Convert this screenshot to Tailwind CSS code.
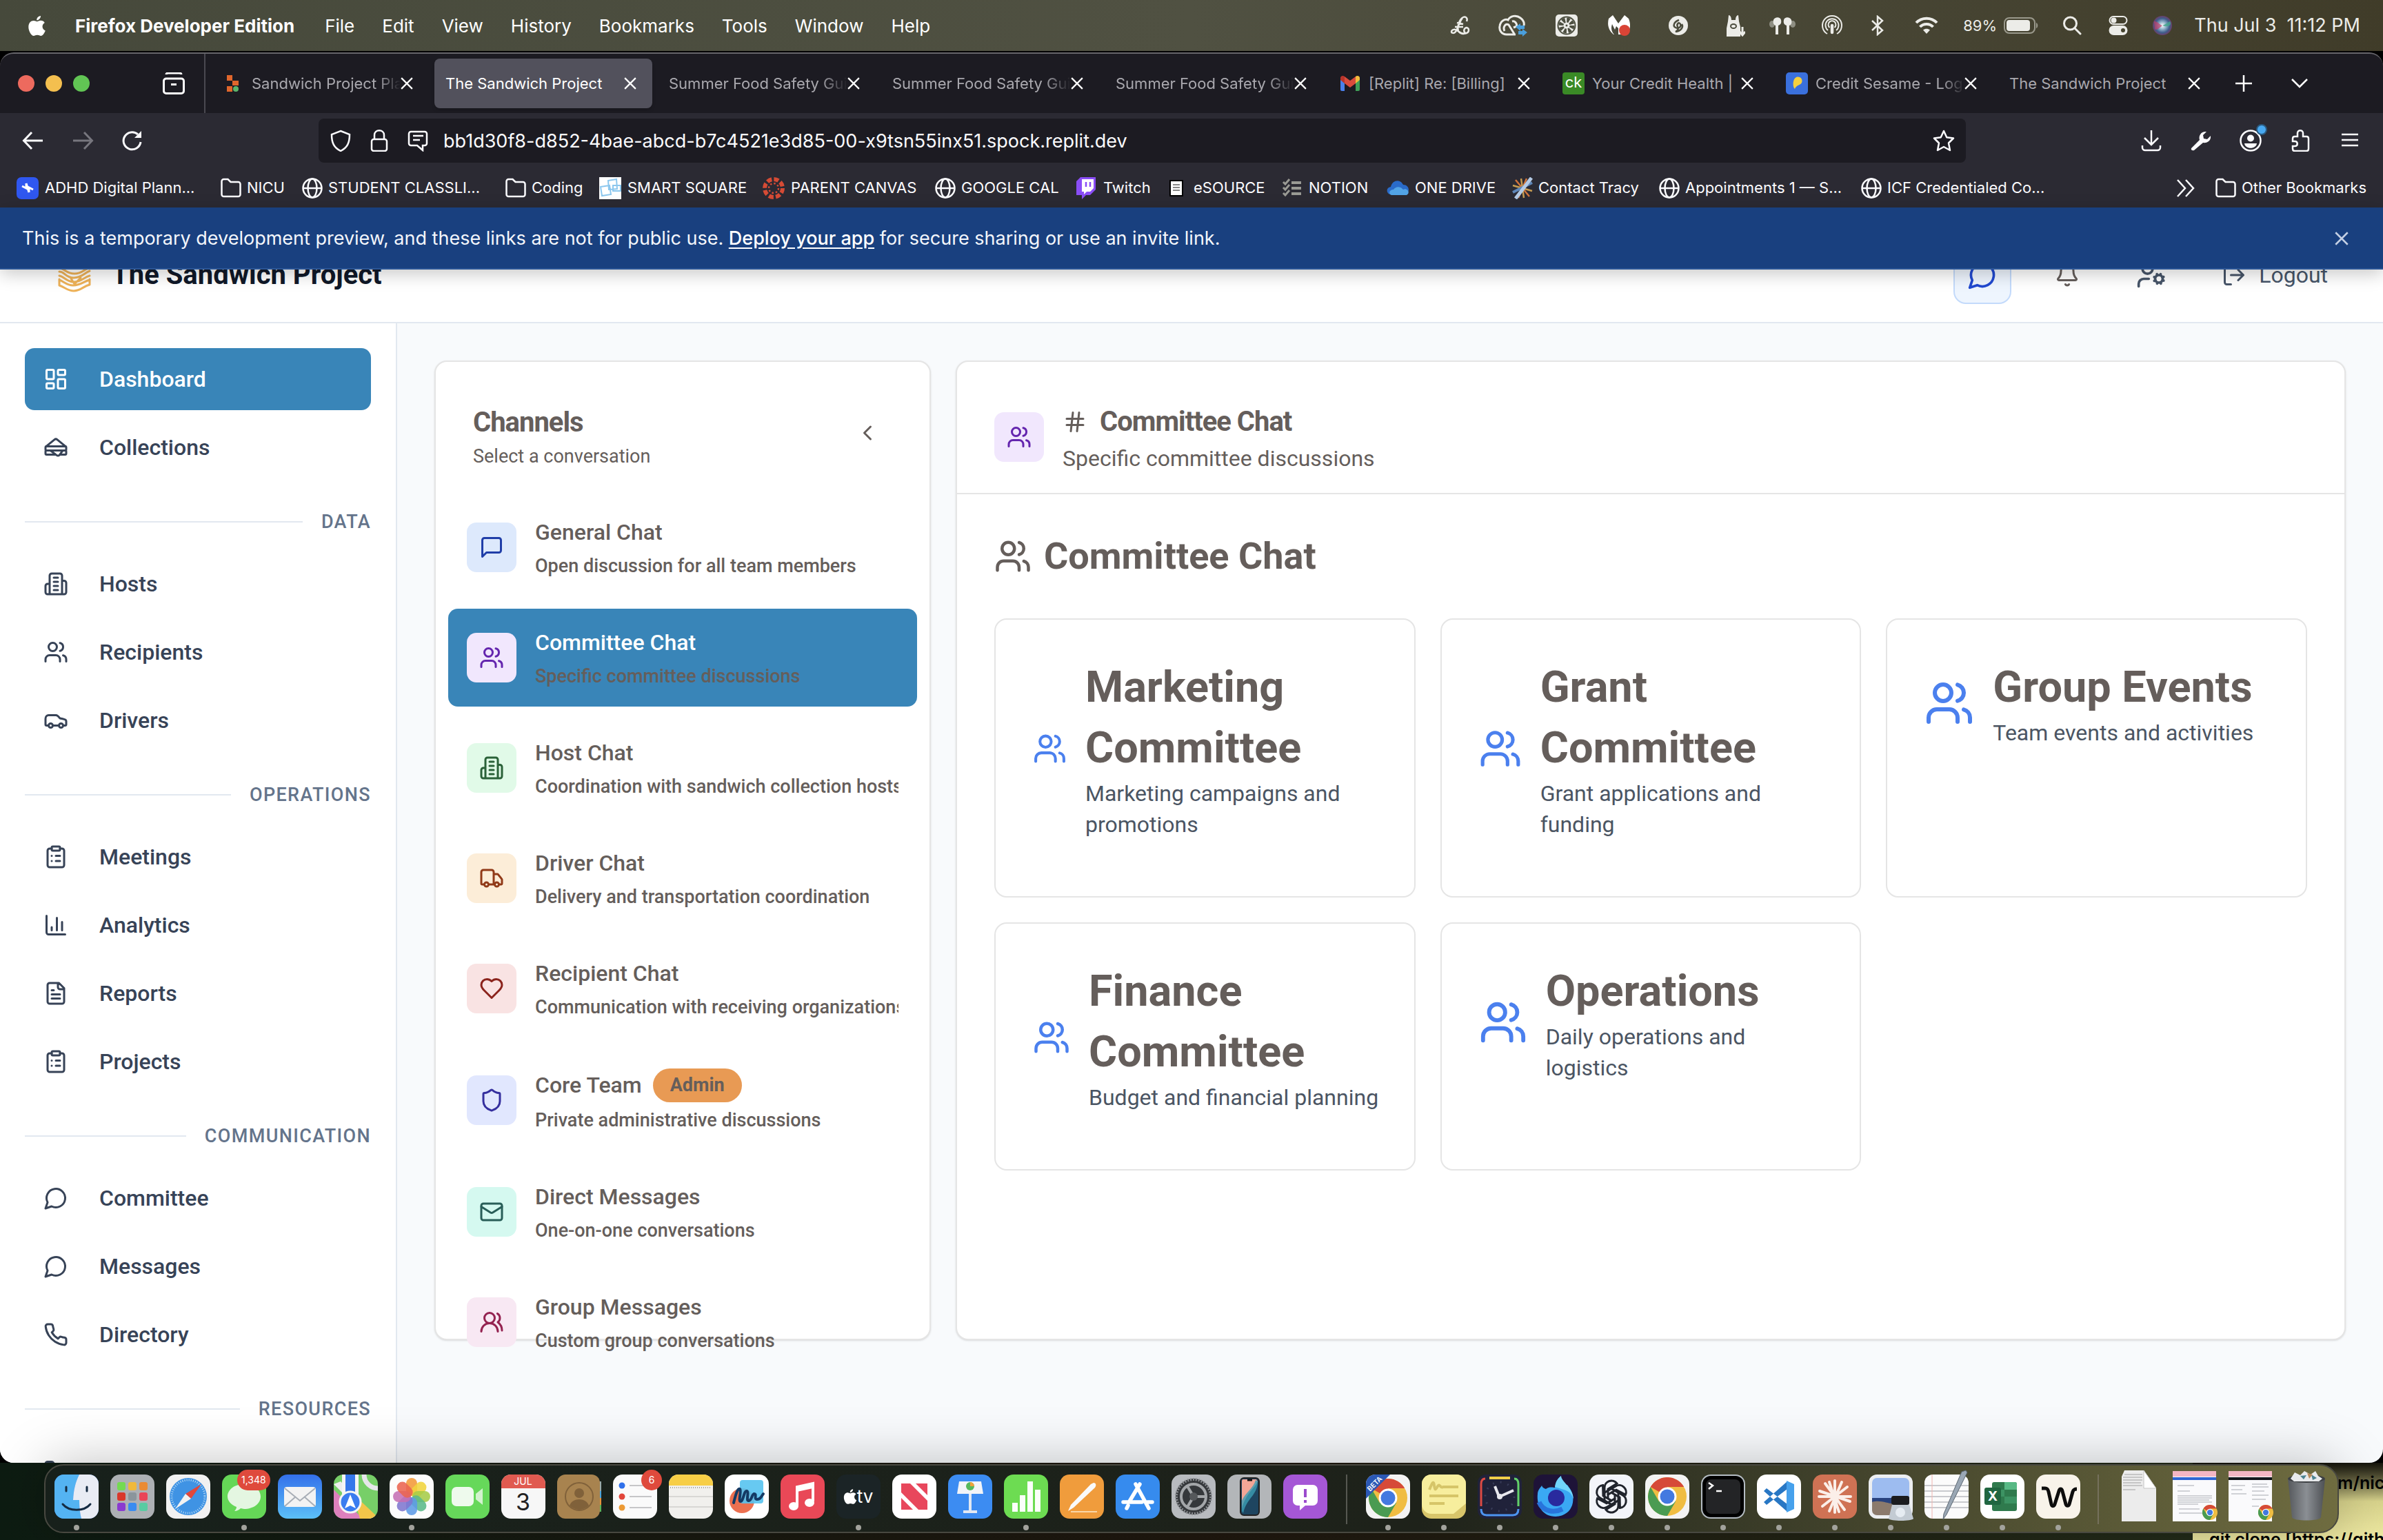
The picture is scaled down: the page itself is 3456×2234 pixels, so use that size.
<!DOCTYPE html>
<html lang="en">
<head>
<meta charset="utf-8">
<title>The Sandwich Project</title>
<script src="https://cdn.jsdelivr.net/npm/@tailwindcss/browser@4"></script>
</head>
<body class="bg-black">
<svg class="hidden" aria-hidden="true">
  <defs>
    <symbol id="dash" viewBox="0 0 24 24"><rect x="3" y="3" width="7" height="9" rx="1"/><rect x="14" y="3" width="7" height="5" rx="1"/><rect x="14" y="12" width="7" height="9" rx="1"/><rect x="3" y="16" width="7" height="5" rx="1"/></symbol>
    <symbol id="sandwich" viewBox="0 0 24 24"><path d="m2.37 11.223 8.372-6.777a2 2 0 0 1 2.516 0l8.371 6.777M21 15a1 1 0 0 1 1 1v2a1 1 0 0 1-1 1h-5.25M3 15a1 1 0 0 0-1 1v2a1 1 0 0 0 1 1h9m-5.33-4 6.13 4.6a2 2 0 0 0 2.8-.4l3.15-4.2"/><rect x="2" y="11" width="20" height="4" rx="1"/></symbol>
    <symbol id="building" viewBox="0 0 24 24"><path d="M6 22V4a2 2 0 0 1 2-2h8a2 2 0 0 1 2 2v18ZM6 12H4a2 2 0 0 0-2 2v6a2 2 0 0 0 2 2h2M18 9h2a2 2 0 0 1 2 2v9a2 2 0 0 1-2 2h-2M10 6h4M10 10h4M10 14h4M10 18h4"/></symbol>
    <symbol id="users" viewBox="0 0 24 24"><path d="M16 21v-2a4 4 0 0 0-4-4H6a4 4 0 0 0-4 4v2M22 21v-2a4 4 0 0 0-3-3.87M16 3.13a4 4 0 0 1 0 7.75"/><circle cx="9" cy="7" r="4"/></symbol>
    <symbol id="car" viewBox="0 0 24 24"><path d="M19 17h2c.6 0 1-.4 1-1v-3c0-.9-.7-1.7-1.5-1.9C18.700 10.600 16 10 16 10s-1.300-1.400-2.200-2.300c-.5-.4-1.100-.7-1.800-.7H5c-1.700 0-3 1.600-3 3.500V16c0 .6.4 1 1 1h2M9 17h6"/><circle cx="7" cy="17" r="2"/><circle cx="17" cy="17" r="2"/></symbol>
    <symbol id="clipboard" viewBox="0 0 24 24"><rect x="8" y="2" width="8" height="4" rx="1"/><path d="M16 4h2a2 2 0 0 1 2 2v14a2 2 0 0 1-2 2H6a2 2 0 0 1-2-2V6a2 2 0 0 1 2-2h2M12 11h4M12 16h4M8 11h.01M8 16h.01"/></symbol>
    <symbol id="chart" viewBox="0 0 24 24"><path d="M3 3v16a2 2 0 0 0 2 2h16M18 17V9M13 17V5M8 17v-3"/></symbol>
    <symbol id="file" viewBox="0 0 24 24"><path d="M15 2H6a2 2 0 0 0-2 2v16a2 2 0 0 0 2 2h12a2 2 0 0 0 2-2V7ZM14 2v4a2 2 0 0 0 2 2h4M10 9H8M16 13H8M16 17H8"/></symbol>
    <symbol id="bubble" viewBox="0 0 24 24"><path d="M7.900 20A9 9 0 1 0 4 16.100L2 22Z"/></symbol>
    <symbol id="phone" viewBox="0 0 24 24"><path d="M22 16.920v3a2 2 0 0 1-2.180 2 19.790 19.790 0 0 1-8.630-3.070 19.500 19.500 0 0 1-6-6 19.790 19.790 0 0 1-3.070-8.670A2 2 0 0 1 4.110 2h3a2 2 0 0 1 2 1.720 12.840 12.840 0 0 0 .7 2.810 2 2 0 0 1-.45 2.110L8.090 9.910a16 16 0 0 0 6 6l1.270-1.270a2 2 0 0 1 2.110-.45 12.840 12.840 0 0 0 2.810.7A2 2 0 0 1 22 16.920z"/></symbol>
    <symbol id="folderl" viewBox="0 0 24 24"><path d="M20 20a2 2 0 0 0 2-2V8a2 2 0 0 0-2-2h-7.900a2 2 0 0 1-1.690-.9L9.600 3.900A2 2 0 0 0 7.930 3H4a2 2 0 0 0-2 2v13a2 2 0 0 0 2 2Z"/></symbol>
    <symbol id="square" viewBox="0 0 24 24"><path d="M21 15a2 2 0 0 1-2 2H7l-4 4V5a2 2 0 0 1 2-2h14a2 2 0 0 1 2 2z"/></symbol>
    <symbol id="truck" viewBox="0 0 24 24"><path d="M14 18V6a2 2 0 0 0-2-2H4a2 2 0 0 0-2 2v11a1 1 0 0 0 1 1h2M15 18H9M19 18h2a1 1 0 0 0 1-1v-3.650a1 1 0 0 0-.22-.624l-3.480-4.350A1 1 0 0 0 17.520 8H14"/><circle cx="17" cy="18" r="2"/><circle cx="7" cy="18" r="2"/></symbol>
    <symbol id="heart" viewBox="0 0 24 24"><path d="M19 14c1.490-1.460 3-3.210 3-5.500A5.500 5.500 0 0 0 16.500 3c-1.760 0-3 .5-4.500 2-1.500-1.500-2.740-2-4.500-2A5.500 5.500 0 0 0 2 8.500c0 2.300 1.500 4.050 3 5.500l7 7Z"/></symbol>
    <symbol id="shield" viewBox="0 0 24 24"><path d="M20 13c0 5-3.500 7.500-7.660 8.950a1 1 0 0 1-.67-.01C7.500 20.500 4 18 4 13V6a1 1 0 0 1 1-1c2 0 4.500-1.200 6.240-2.720a1.170 1.170 0 0 1 1.520 0C14.510 3.810 17 5 19 5a1 1 0 0 1 1 1z"/></symbol>
    <symbol id="mail" viewBox="0 0 24 24"><rect x="2" y="4" width="20" height="16" rx="2"/><path d="m22 7-8.970 5.700a1.940 1.940 0 0 1-2.060 0L2 7"/></symbol>
    <symbol id="round" viewBox="0 0 24 24"><path d="M18 21a8 8 0 0 0-16 0M22 20c0-3.370-2-6.500-4-8a5 5 0 0 0-.45-8.300"/><circle cx="10" cy="8" r="5"/></symbol>
    <symbol id="hash" viewBox="0 0 24 24"><path d="M4 9h16M4 15h16M10 3 8 21M16 3l-2 18"/></symbol>
    <symbol id="left" viewBox="0 0 24 24"><path d="m15 18-6-6 6-6"/></symbol>
    <symbol id="bell" viewBox="0 0 24 24"><path d="M10.268 21a2 2 0 0 0 3.464 0M3.262 15.326A1 1 0 0 0 4 17h16a1 1 0 0 0 .74-1.673C19.410 13.956 18 12.499 18 8A6 6 0 0 0 6 8c0 4.499-1.411 5.956-2.738 7.326"/></symbol>
    <symbol id="cog" viewBox="0 0 24 24"><circle cx="18" cy="15" r="3"/><circle cx="9" cy="7" r="4"/><path d="M10 15H6a4 4 0 0 0-4 4v2m19.700-4.600-.9-.3m-5.600-2.200-.9-.3m2.300 5.100.3-.9m2.200-5.600.3-.9m.2 7.400-.4-1m-2.400-5.400-.4-1m-2.100 5.300 1-.4m5.400-2.400 1-.4"/></symbol>
    <symbol id="logout" viewBox="0 0 24 24"><path d="M9 21H5a2 2 0 0 1-2-2V5a2 2 0 0 1 2-2h4M16 17l5-5-5-5M21 12H9"/></symbol>
    <symbol id="x" viewBox="0 0 16 16"><path d="m1 1 14 14M15 1 1 15"/></symbol>
    <symbol id="folder" viewBox="0 0 32 32"><path d="M2.500 6a3 3 0 0 1 3-3h6l4 4h11a3 3 0 0 1 3 3v15a3 3 0 0 1-3 3h-21a3 3 0 0 1-3-3z"/></symbol>
    <symbol id="globe" viewBox="0 0 32 32"><circle cx="16" cy="16" r="13.500"/><ellipse cx="16" cy="16" rx="6.500" ry="13.500"/><path d="M2.500 16h27"/></symbol>
    <symbol id="chrome" viewBox="0 0 48 48"><circle cx="24" cy="24" r="24" fill="#f0bd42"/><path d="M24 24 3.200 12A24 24 0 0 1 44.800 12H24z" fill="#d64a38"/><path d="M3.200 12A24 24 0 0 0 24 48L34.400 30 24 24 13.600 30z" fill="#4a9b52"/><circle cx="24" cy="24" r="11.500" fill="#fff"/><circle cx="24" cy="24" r="9" fill="#4379e0"/></symbol>
    <symbol id="apple" viewBox="0 0 24 28"><path d="M17 1c.2 2.700-2.300 5.800-5.200 5.700C11.500 4 14 1.200 17 1zM12.200 8.300c1 0 2.500-1.300 4.900-1.300 2 0 4 1 5.100 2.900-4.400 2.500-3.600 8.600.9 10.400-1.200 3-3.300 6.700-5.800 6.700-1.700 0-2.500-1.100-4.700-1.100S9.400 27 7.700 27C4.700 27 1 20.600 1 15.500 1 10 4.300 7.200 7.700 7.200c2 0 3.400 1.100 4.500 1.100z" fill="currentColor" stroke="none"/></symbol>
  </defs>
</svg>

<div class="flex h-screen flex-col overflow-hidden bg-black">

  <!-- System menu bar -->
  <header class="flex h-[74px] shrink-0 items-center justify-between bg-linear-to-r from-[#46493b] via-[#505142] to-[#403c29] pl-10 pr-[33px] font-[Inter,sans-serif] text-[26px] text-white">
    <nav class="flex items-center gap-10" aria-label="Menu bar">
      <svg class="mr-0.5 h-[31px] w-[27px]" viewBox="0 0 24 28"><use href="#apple"/></svg>
      <button class="mr-1 font-bold">Firefox Developer Edition</button>
      <button>File</button><button>Edit</button><button>View</button><button>History</button><button>Bookmarks</button><button>Tools</button><button>Window</button><button>Help</button>
    </nav>
    <div class="flex items-center text-[#ecece8]">
      <span class="flex w-[76px] justify-center"><svg class="size-8" viewBox="0 0 32 32" fill="none" stroke="currentColor" stroke-width="2.500"><path d="M26 10c2-4-1-8-5-6-6 3-9 15-7 20 2 4 8 5 12 3M20 5c-4 4-6 14-10 20-2 3-6 2-6 0s4-5 8-2 8 6 14 4c4-2 4-7 0-8-4 1-5 5-2 8M9 18h12M12 12l9 2"/></svg></span>
      <span class="flex w-[78px] justify-center"><svg class="h-8 w-11" viewBox="0 0 44 32" fill="none" stroke="currentColor" stroke-width="3"><path d="M26 29H13C5 29 2 22 3 17 4 9 11 6 15 8c3-6 12-8 18-3 4 3 6 7 5 11M10 24c-3-6 2-12 6-9l8 13M21 10c4-1 7 3 7 7l-5 2"/><path d="M26 18l7-5v3h6v5h-6v3zM43 26l-7 6v-3h-6v-5h6v-3z" fill="#4a9fdc" stroke="none"/></svg></span>
      <span class="flex w-[78px] justify-center"><svg class="size-8" viewBox="0 0 32 32"><rect width="32" height="32" rx="5" fill="currentColor"/><circle cx="16" cy="16" r="12.500" fill="none" stroke="#4d4f40" stroke-width="2"/><circle cx="16" cy="16" r="8" fill="none" stroke="#4d4f40" stroke-width="7" stroke-dasharray="4 2.280"/><circle cx="16" cy="16" r="3.500" fill="currentColor"/><circle cx="16" cy="16" r="1.500" fill="#4d4f40"/></svg></span>
      <span class="flex w-[74px] justify-center"><svg class="size-8" viewBox="0 0 32 32"><path d="M1 6 7 1l8 12L24 1l6 5c4 10 2 18-4 23H8C0 22-1 14 1 6z" fill="#fff"/><path d="m6 14 4 8 2-5 3 3v9H9c-4-4-5-9-3-15z" fill="#4a4a3c"/><circle cx="24" cy="23" r="8" fill="#d94436"/></svg></span>
      <span class="flex w-[98px] justify-center"><svg class="size-7" viewBox="0 0 28 28"><circle cx="14" cy="14" r="14" fill="currentColor"/><path d="M15 6c-8 3-9 9-5 11s9-1 7-5-6 0-4 4c2 4-1 6-3 7 8-1 12-7 9-11" fill="none" stroke="#4b4c3d" stroke-width="2.500"/></svg></span>
      <span class="flex w-[66px] justify-center"><svg class="h-8 w-[30px]" viewBox="0 0 30 32"><path d="M3 32V20L5 10l1-9c3 0 4 4 4 7h6c0-3 1-7 4-7l1 9 2 8v14z" fill="currentColor"/><path d="M26 18v10m-4-3 4 5 4-5" stroke="#ecece8" stroke-width="3" fill="none"/><ellipse cx="13" cy="17" rx="5" ry="4" fill="#4b4c3d"/><ellipse cx="13" cy="17" rx="3" ry="2" fill="#ecece8"/></svg></span>
      <span class="flex w-[72px] justify-center"><svg class="h-7 w-[38px]" viewBox="0 0 38 28"><ellipse cx="4" cy="12" rx="4" ry="5" fill="#8e8e82"/><ellipse cx="34" cy="12" rx="4" ry="5" fill="#8e8e82"/><path d="M6 6c2-5 10-5 11 0s-1 7-4 8v13H9V14C6 13 5 10 6 6zM32 6c-2-5-10-5-11 0s1 7 4 8v13h4V14c3-1 4-4 3-8z" fill="currentColor"/></svg></span>
      <span class="flex w-[72px] justify-center"><svg class="size-8" viewBox="0 0 32 32" fill="none" stroke="currentColor" stroke-width="2"><path d="M9 28a14 14 0 1 1 14 0M10 23a9.500 9.500 0 1 1 12 0M12.500 19a5.500 5.500 0 1 1 7 0"/><path d="M16 16v10" stroke-width="4.500" stroke-linecap="round"/></svg></span>
      <span class="flex w-[60px] justify-center"><svg class="h-[30px] w-5" viewBox="0 0 20 30" fill="none" stroke="currentColor" stroke-width="2.500"><path d="m2 8 15 14-7 6V2l7 6L2 22"/></svg></span>
      <span class="flex w-[82px] justify-center"><svg class="h-[26px] w-[34px]" viewBox="0 0 34 26" fill="none" stroke="currentColor" stroke-width="4"><path d="M2 9c8-8.500 22-8.500 30 0M7.500 15c5-5.500 14-5.500 19 0"/><path d="M17 25l-5-5.500c3-2.500 7-2.500 10 0z" fill="currentColor" stroke="none"/></svg></span>
      <span class="w-[71px] pl-3 text-[22px]">89%</span>
      <svg class="h-6 w-[50px]" viewBox="0 0 50 24"><rect x="1" y="1" width="44" height="22" rx="7" fill="none" stroke="#9a998c" stroke-width="2"/><rect x="4" y="4" width="34" height="16" rx="4" fill="#ecece8"/><path d="M47 8c3 1 3 7 0 8z" fill="#9a998c"/></svg>
      <span class="flex w-[98px] justify-center"><svg class="size-7" viewBox="0 0 28 28" fill="none" stroke="currentColor" stroke-width="3"><circle cx="11.500" cy="11" r="9"/><path d="m18 18 8 8" stroke-linecap="round"/></svg></span>
      <span class="flex w-9 justify-center"><svg class="size-7" viewBox="0 0 28 28" fill="none" stroke="currentColor" stroke-width="2"><rect x="1.500" y="1" width="25" height="11" rx="5.500"/><circle cx="7.500" cy="6.500" r="3" fill="currentColor"/><rect x="1.500" y="15" width="25" height="12" rx="6" fill="currentColor"/><circle cx="21" cy="21" r="3" fill="#46442f" stroke="none"/></svg></span>
      <span class="flex w-[92px] justify-center"><svg class="size-7" viewBox="0 0 28 28"><defs><radialGradient id="siri"><stop offset="0" stop-color="#fff"/><stop offset=".4" stop-color="#8fb0c8"/><stop offset=".75" stop-color="#3f5d8c"/><stop offset="1" stop-color="#6b3f6a"/></radialGradient></defs><circle cx="14" cy="14" r="14" fill="url(#siri)"/><path d="M2 8c6 0 8 5 12 6-4 3-8 8-11 5" fill="#c23d6a" opacity=".7"/><path d="M14 14c4-1 8-5 11-6 4 6-4 9-11 6z" fill="#42a58c" opacity=".8"/></svg></span>
      <time class="whitespace-pre text-[27px]">Thu Jul 3  11:12 PM</time>
    </div>
  </header>

  <!-- Browser window -->
  <div class="mt-0.5 flex min-h-0 flex-1 flex-col overflow-hidden rounded-[20px] border-t-2 border-[#67666c] bg-[#1c1b22]">

    <!-- Tab strip -->
    <div class="flex h-[86px] shrink-0 items-center font-[Inter,sans-serif] text-[22px] text-[#a9a8ae]">
      <div class="flex h-full w-[298px] shrink-0 items-center border-r-2 border-[#4a4951] pl-[26px]">
        <div class="flex gap-4"><span class="size-6 rounded-full bg-[#ed6a5e]"></span><span class="size-6 rounded-full bg-[#f4bf4f]"></span><span class="size-6 rounded-full bg-[#61c554]"></span></div>
        <button class="ml-[106px]" aria-label="Recent tabs"><svg class="size-8" viewBox="0 0 32 32" fill="none" stroke="#fff" stroke-width="3"><path d="M5 3c0-2 2-2 3-2h16c1 0 3 0 3 2"/><rect x="1.500" y="9" width="29" height="21.500" rx="3.500"/><path d="M12 17.500h8"/></svg></button>
      </div>
      <div class="flex gap-2 pl-2">
        <div class="flex h-[72px] w-[316px] items-center pl-4 pr-[23px]"><svg class="mr-[11px] size-8 shrink-0" viewBox="0 0 32 32"><path d="M7 4h8v8H7zM15 12h9v7h-9zM7 20h8v8H7z" fill="#e0662c"/><circle cx="20" cy="24" r="4" fill="#5bb56b"/></svg><button class="flex-1 overflow-hidden whitespace-nowrap text-left [mask-image:linear-gradient(to_right,black_85%,transparent)]">Sandwich Project Pla</button><button aria-label="Close tab"><svg class="size-[18px]" fill="none" stroke="#fff" stroke-width="2"><use href="#x"/></svg></button></div>
        <div class="flex h-[72px] w-[316px] items-center rounded-lg bg-[#52515c] pl-4 pr-[23px] text-white shadow-md"><button class="flex-1 overflow-hidden whitespace-nowrap text-left">The Sandwich Project</button><button aria-label="Close tab"><svg class="size-[18px]" fill="none" stroke="#fff" stroke-width="2"><use href="#x"/></svg></button></div>
        <div class="flex h-[72px] w-[316px] items-center pl-4 pr-[23px]"><button class="flex-1 overflow-hidden whitespace-nowrap text-left [mask-image:linear-gradient(to_right,black_85%,transparent)]">Summer Food Safety Gui</button><button aria-label="Close tab"><svg class="size-[18px]" fill="none" stroke="#fff" stroke-width="2"><use href="#x"/></svg></button></div>
        <div class="flex h-[72px] w-[316px] items-center pl-4 pr-[23px]"><button class="flex-1 overflow-hidden whitespace-nowrap text-left [mask-image:linear-gradient(to_right,black_85%,transparent)]">Summer Food Safety Gui</button><button aria-label="Close tab"><svg class="size-[18px]" fill="none" stroke="#fff" stroke-width="2"><use href="#x"/></svg></button></div>
        <div class="flex h-[72px] w-[316px] items-center pl-4 pr-[23px]"><button class="flex-1 overflow-hidden whitespace-nowrap text-left [mask-image:linear-gradient(to_right,black_85%,transparent)]">Summer Food Safety Gui</button><button aria-label="Close tab"><svg class="size-[18px]" fill="none" stroke="#fff" stroke-width="2"><use href="#x"/></svg></button></div>
        <div class="flex h-[72px] w-[316px] items-center pl-4 pr-[23px]"><svg class="mr-[11px] size-8 shrink-0" viewBox="0 0 32 32"><path d="M2 7v18a2 2 0 0 0 2 2h4V13z" fill="#4a80ec"/><path d="M30 7v18a2 2 0 0 1-2 2h-4V13z" fill="#3f9f58"/><path d="M8 6v10l8 6 8-6V6l-8 6z" fill="#d94c3d"/><path d="M2 8c0-3 4-4 6-2v10l-6-5z" fill="#b8342b"/><path d="M30 8c0-3-4-4-6-2v10l6-5z" fill="#f3bc3d"/></svg><button class="flex-1 overflow-hidden whitespace-nowrap text-left">[Replit] Re: [Billing]</button><button aria-label="Close tab"><svg class="size-[18px]" fill="none" stroke="#fff" stroke-width="2"><use href="#x"/></svg></button></div>
        <div class="flex h-[72px] w-[316px] items-center pl-4 pr-[23px]"><span class="mr-[11px] flex size-8 shrink-0 items-center justify-center rounded-sm bg-[#3a8a26] pb-1 text-[22px] text-white">ck</span><button class="flex-1 overflow-hidden whitespace-nowrap text-left">Your Credit Health |</button><button aria-label="Close tab"><svg class="size-[18px]" fill="none" stroke="#fff" stroke-width="2"><use href="#x"/></svg></button></div>
        <div class="flex h-[72px] w-[316px] items-center pl-4 pr-[23px]"><svg class="mr-[11px] size-8 shrink-0" viewBox="0 0 32 32"><rect width="32" height="32" rx="5" fill="#3a70dd"/><path d="M15 7c6-2 10 3 8 8-2 4-8 3-10 9-3-2-4-14 2-17z" fill="#f5d03e"/></svg><button class="flex-1 overflow-hidden whitespace-nowrap text-left [mask-image:linear-gradient(to_right,black_85%,transparent)]">Credit Sesame - Log</button><button aria-label="Close tab"><svg class="size-[18px]" fill="none" stroke="#fff" stroke-width="2"><use href="#x"/></svg></button></div>
        <div class="flex h-[72px] w-[316px] items-center pl-4 pr-[23px]"><button class="flex-1 overflow-hidden whitespace-nowrap text-left">The Sandwich Project</button><button aria-label="Close tab"><svg class="size-[18px]" fill="none" stroke="#fff" stroke-width="2"><use href="#x"/></svg></button></div>
      </div>
      <button class="ml-7" aria-label="New tab"><svg class="size-6" viewBox="0 0 24 24" stroke="#fff" stroke-width="2.500"><path d="M12 0v24M0 12h24"/></svg></button>
      <button class="ml-[57px]" aria-label="List all tabs"><svg class="size-6" viewBox="0 0 24 24" fill="none" stroke="#fff" stroke-width="2.500"><path d="m1 6 11 11L23 6"/></svg></button>
    </div>

    <!-- Navigation bar -->
    <div class="flex h-20 shrink-0 items-center bg-[#2b2a33] pr-8 text-[#fbfbfe]">
      <div class="flex w-[462px] shrink-0 items-center gap-10 pl-8">
        <button aria-label="Back"><svg class="size-8" viewBox="0 0 32 32" fill="none" stroke="currentColor" stroke-width="3"><path d="M30 16H3M14 4 2.500 16 14 28"/></svg></button>
        <button aria-label="Forward" class="text-[#77767e]"><svg class="size-8" viewBox="0 0 32 32" fill="none" stroke="currentColor" stroke-width="3"><path d="M2 16h27M18 4l11.500 12L18 28"/></svg></button>
        <button aria-label="Reload"><svg class="size-8" viewBox="0 0 32 32" fill="none" stroke="currentColor" stroke-width="3"><path d="M28 18a12.500 12.500 0 1 1-4-11"/><path d="M29 2v10H19z" fill="currentColor" stroke="none"/></svg></button>
      </div>
      <div class="flex h-16 min-w-0 flex-1 items-center rounded-lg bg-[#1c1b22] pl-4 pr-4">
        <svg class="mr-6 size-8 shrink-0" viewBox="0 0 32 32" fill="none" stroke="currentColor" stroke-width="2.500"><path d="M16 2 29 7c0 12-3 19-13 24C6 26 3 19 3 7z"/></svg>
        <svg class="mr-6 size-8 shrink-0" viewBox="0 0 32 32" fill="none" stroke="currentColor" stroke-width="2.500"><rect x="5" y="14" width="22" height="17" rx="3"/><path d="M9 14V8c0-9 14-9 14 0v6"/></svg>
        <svg class="mr-[21px] size-8 shrink-0" viewBox="0 0 32 32" fill="none" stroke="currentColor" stroke-width="2.500"><path d="M23 23v7l-8-7H6a3 3 0 0 1-3-3V6a3 3 0 0 1 3-3h20a3 3 0 0 1 3 3v14a3 3 0 0 1-3 3zM9 9h15M9 15h10"/></svg>
        <input aria-label="Address" class="min-w-0 flex-1 bg-transparent pt-0.5 font-[Inter,sans-serif] text-[27px] outline-none" value="bb1d30f8-d852-4bae-abcd-b7c4521e3d85-00-x9tsn55inx51.spock.replit.dev">
        <button aria-label="Bookmark this page"><svg class="size-8" viewBox="0 0 32 32" fill="none" stroke="currentColor" stroke-width="2.500" stroke-linejoin="round"><path d="m16 2 4.300 9.300 9.700 1.200-7 7 2 10.500-9-5-9 5 2-10.500-7-7 9.700-1.200z"/></svg></button>
      </div>
      <div class="flex shrink-0 items-center gap-10 pl-[253px]">
        <button aria-label="Downloads"><svg class="size-8" viewBox="0 0 32 32" fill="none" stroke="currentColor" stroke-width="2.500"><path d="M16 1v20M6 12l10 10 10-10M3 23v3a4 4 0 0 0 4 4h18a4 4 0 0 0 4-4v-3"/></svg></button>
        <button aria-label="Tools"><svg class="size-8" viewBox="0 0 32 32" fill="currentColor"><path d="M2 27 14 15C12 8 17 2 24 3l-5 5 1 5 5 1 5-5c1 7-5 11-11 10L6 30c-3 1-5-1-4-3z"/></svg></button>
        <button aria-label="Account" class="relative"><svg class="size-8" viewBox="0 0 32 32"><circle cx="16" cy="16" r="14.500" fill="none" stroke="currentColor" stroke-width="2.500"/><circle cx="16" cy="12.500" r="5" fill="currentColor"/><path d="M7 20h18c-1 9-17 9-18 0z" fill="currentColor"/></svg><span class="absolute -right-2 -top-2 size-4 rounded-full border-2 border-[#2b5a80] bg-[#48a8f0]"></span></button>
        <button aria-label="Extensions"><svg class="size-8" viewBox="0 0 32 32" fill="none" stroke="currentColor" stroke-width="2.500"><path d="M5 13c0-2 1-3 3-3h4V5c0-5 8-5 8 0v5h5c2 0 3 1 3 3v15c0 2-1 3-3 3H8c-2 0-3-1-3-3v-4h3c5 0 5-7 0-7H5z"/></svg></button>
        <button aria-label="Menu"><svg class="size-8" viewBox="0 0 32 32" stroke="currentColor" stroke-width="2.500"><path d="M4 7h24M4 15h24M4 23h24"/></svg></button>
      </div>
    </div>

    <!-- Bookmarks bar -->
    <nav class="flex h-[57px] shrink-0 items-center justify-between bg-[#2b2a33] pl-6 pr-6 font-[Inter,sans-serif] text-[22px] text-[#fbfbfe]" aria-label="Bookmarks">
      <div class="flex items-center whitespace-nowrap">
        <a href="#" class="flex w-[295px] items-center gap-[9px]"><svg class="size-8" viewBox="0 0 32 32"><rect width="32" height="32" rx="7" fill="#2f57f0"/><path d="M14 9v7l-6-3M18 22v-7l6 3M14 9l4 13" fill="none" stroke="#fff" stroke-width="3"/></svg>ADHD Digital Plann...</a>
        <a href="#" class="flex w-[118px] items-center gap-[7px]"><svg class="size-8" fill="none" stroke="currentColor" stroke-width="2.500"><use href="#folder"/></svg>NICU</a>
        <a href="#" class="flex w-[295px] items-center gap-[7px]"><svg class="size-8" fill="none" stroke="currentColor" stroke-width="2.500"><use href="#globe"/></svg>STUDENT CLASSLI...</a>
        <a href="#" class="flex w-[137px] items-center gap-[7px]"><svg class="size-8" fill="none" stroke="currentColor" stroke-width="2.500"><use href="#folder"/></svg>Coding</a>
        <a href="#" class="flex w-[237px] items-center gap-[9px]"><svg class="size-8" viewBox="0 0 32 32"><path d="M0 0h32v32H0z" fill="#fff"/><path d="m2 14 13-2 2 13-13 2zM13 5l12-2 1 14-12 1zM20 12h11v8H20z" fill="none" stroke="#8cc7ee" stroke-width="2"/></svg>SMART SQUARE</a>
        <a href="#" class="flex w-[249px] items-center gap-[9px]"><svg class="size-8" viewBox="0 0 32 32"><circle cx="16" cy="16" r="13" fill="none" stroke="#d64b35" stroke-width="6" stroke-dasharray="7 3.210"/><circle cx="16" cy="16" r="7" fill="none" stroke="#d64b35" stroke-width="2.500" stroke-dasharray="2.500 3"/></svg>PARENT CANVAS</a>
        <a href="#" class="flex w-[204px] items-center gap-[7px]"><svg class="size-8" fill="none" stroke="currentColor" stroke-width="2.500"><use href="#globe"/></svg>GOOGLE CAL</a>
        <a href="#" class="flex w-[131px] items-center gap-[9px]"><svg class="size-8" viewBox="0 0 32 32"><path d="M8 0h22v18l-8 8h-6l-6 6v-6H2V6z" fill="#8a4df6"/><path d="M10 3h17v13l-5 5h-5l-4 4v-4h-3z" fill="#fff"/><path d="M16 7v7M22 7v7" stroke="#8a4df6" stroke-width="2.500"/></svg>Twitch</a>
        <a href="#" class="flex w-[169px] items-center gap-[9px]"><svg class="size-8" viewBox="0 0 32 32"><path d="M6 4h20v24H6z" fill="#000"/><path d="M8 6h16v20H8z" fill="#fff"/><path d="M11 11h10M11 15h10M11 19h10" stroke="#888" stroke-width="2"/></svg>eSOURCE</a>
        <a href="#" class="flex w-[152px] items-center gap-[7px]"><svg class="size-8" viewBox="0 0 32 32" stroke="#9a9a94" fill="none"><path d="M14 8h14M14 16h14M14 24h14" stroke-width="4"/><path d="m2 7 3 3 6-7M2 15l3 3 6-7M2 23l3 3 6-7" stroke-width="3"/></svg>NOTION</a>
        <a href="#" class="flex w-[181px] items-center gap-[9px]"><svg class="size-8" viewBox="0 0 32 32"><path d="M5 25c-6-2-6-10 1-11C9 3 20 3 24 11c8 0 11 9 4 14z" fill="#2a6bc9"/><path d="M7 26c-5-2-3-8 3-8 4-6 11-4 14 0 6-3 11 5 5 8z" fill="#52a4e6"/></svg>ONE DRIVE</a>
        <a href="#" class="flex w-[213px] items-center gap-[7px]"><svg class="size-8" viewBox="0 0 32 32" stroke-width="2.500"><path d="m6 4 20 24M22 2 10 30" stroke="#d0743c"/><path d="M2 12l28 8M14 2l4 28" stroke="#c79c52"/><path d="M2 22 30 8" stroke="#5e86b8" stroke-width="4"/><path d="M29 1 6 31" stroke="#b4cbe6" stroke-width="5"/></svg>Contact Tracy</a>
        <a href="#" class="flex w-[293px] items-center gap-[7px]"><svg class="size-8" fill="none" stroke="currentColor" stroke-width="2.500"><use href="#globe"/></svg>Appointments 1 — S...</a>
        <a href="#" class="flex w-[293px] items-center gap-[7px]"><svg class="size-8" fill="none" stroke="currentColor" stroke-width="2.500"><use href="#globe"/></svg>ICF Credentialed Co...</a>
      </div>
      <div class="flex items-center whitespace-nowrap">
        <button class="mr-7" aria-label="More bookmarks"><svg class="size-7" viewBox="0 0 28 28" fill="none" stroke="currentColor" stroke-width="2.500"><path d="m2 2 11 12L2 26M14 2l11 12-11 12"/></svg></button>
        <a href="#" class="flex items-center gap-[7px]"><svg class="size-8" fill="none" stroke="currentColor" stroke-width="2.500"><use href="#folder"/></svg>Other Bookmarks</a>
      </div>
    </nav>

    <!-- Preview notice -->
    <div class="relative z-10 flex h-[90px] shrink-0 items-center justify-between border-b-2 border-[#2a5596] bg-[#19407f] pl-8 pr-[50px] pt-0.5 font-[Inter,sans-serif] text-[27px] text-[#f3f6fb] shadow-[0_6px_24px_rgba(0,0,0,0.22)]">
      <p>This is a temporary development preview, and these links are not for public use. <a href="#" class="font-medium text-white underline underline-offset-4">Deploy your app</a> for secure sharing or use an invite link.</p>
      <button aria-label="Dismiss"><svg class="size-5" fill="none" stroke="#c4d0e4" stroke-width="2"><use href="#x"/></svg></button>
    </div>

    <!-- Application -->
    <div class="flex min-h-0 flex-1 flex-col bg-[#f8fafc] font-[Roboto,sans-serif] text-[32px] text-[#655e5b]">
      <header class="flex h-[78px] shrink-0 items-end overflow-hidden border-b-2 border-[#e2e8f0] bg-white">
        <div class="flex h-[136px] w-full shrink-0 items-center justify-between pl-[81px] pr-20">
          <div class="flex items-center gap-[27px]">
            <svg class="h-[54px] w-[54px]" viewBox="0 0 54 54" fill="none" stroke="#eeb258" stroke-width="3" stroke-linejoin="round" stroke-linecap="round"><path d="M5 9c9-6 35-6 44 0v8c-7 0-10 8-22 8S12 17 5 17z"/><path d="M5 22c8 0 9 9 21 9s15-7 23-10M5 28c7 1 10 9 21 9s15-7 23-9M5 34c6 2 11 8 20 8 11 0 16-6 24-8M5 33v9c7 2 12 8 21 8 10 0 14-7 23-9v-8M22 32l5 8 9-9"/></svg>
            <h1 class="text-[40px] font-bold text-[#101828]">The Sandwich Project</h1>
          </div>
          <div class="flex items-center text-[#475569]">
            <button aria-label="Messages" class="flex size-[84px] items-center justify-center rounded-[18px] border-2 border-[#c3dafb] bg-[#eef5fe] text-[#2149d0]"><svg class="size-11" fill="none" stroke="currentColor" stroke-width="2" stroke-linecap="round" stroke-linejoin="round"><use href="#bubble"/></svg></button>
            <button aria-label="Notifications" class="ml-[63px] text-[#655e5b]"><svg class="size-9" fill="none" stroke="currentColor" stroke-width="2" stroke-linecap="round" stroke-linejoin="round"><use href="#bell"/></svg></button>
            <button aria-label="Account settings" class="ml-[82px]"><svg class="size-11" fill="none" stroke="currentColor" stroke-width="2" stroke-linecap="round" stroke-linejoin="round"><use href="#cog"/></svg></button>
            <button class="ml-20 flex items-center gap-[18px]"><svg class="size-9" fill="none" stroke="currentColor" stroke-width="2" stroke-linecap="round" stroke-linejoin="round"><use href="#logout"/></svg>Logout</button>
          </div>
        </div>
      </header>

      <div class="flex min-h-0 flex-1">
        <!-- Sidebar -->
        <nav class="flex w-[576px] shrink-0 flex-col gap-[9px] overflow-hidden border-r-2 border-[#e2e8f0] bg-white px-9 pt-9 font-medium text-[#374357]" aria-label="Sections">
          <a href="#" class="flex h-[90px] shrink-0 items-center gap-[45px] rounded-[14px] bg-[#3985b8] px-[27px] text-white"><svg class="size-9" fill="none" stroke="currentColor" stroke-width="2" stroke-linecap="round" stroke-linejoin="round"><use href="#dash"/></svg>Dashboard</a>
          <a href="#" class="flex h-[90px] shrink-0 items-center gap-[45px] px-[27px]"><svg class="size-9" fill="none" stroke="currentColor" stroke-width="2" stroke-linecap="round" stroke-linejoin="round"><use href="#sandwich"/></svg>Collections</a>
          <div class="mt-[27px] flex h-[54px] shrink-0 items-center gap-[27px] mb-[9px]"><span class="h-0.5 flex-1 bg-[#e2e8f0]"></span><h2 class="text-[27px] tracking-wider text-[#64748b]">DATA</h2></div>
          <a href="#" class="flex h-[90px] shrink-0 items-center gap-[45px] px-[27px]"><svg class="size-9" fill="none" stroke="currentColor" stroke-width="2" stroke-linecap="round" stroke-linejoin="round"><use href="#building"/></svg>Hosts</a>
          <a href="#" class="flex h-[90px] shrink-0 items-center gap-[45px] px-[27px]"><svg class="size-9" fill="none" stroke="currentColor" stroke-width="2" stroke-linecap="round" stroke-linejoin="round"><use href="#users"/></svg>Recipients</a>
          <a href="#" class="flex h-[90px] shrink-0 items-center gap-[45px] px-[27px]"><svg class="size-9" fill="none" stroke="currentColor" stroke-width="2" stroke-linecap="round" stroke-linejoin="round"><use href="#car"/></svg>Drivers</a>
          <div class="mt-[27px] flex h-[54px] shrink-0 items-center gap-[27px] mb-[9px]"><span class="h-0.5 flex-1 bg-[#e2e8f0]"></span><h2 class="text-[27px] tracking-wider text-[#64748b]">OPERATIONS</h2></div>
          <a href="#" class="flex h-[90px] shrink-0 items-center gap-[45px] px-[27px]"><svg class="size-9" fill="none" stroke="currentColor" stroke-width="2" stroke-linecap="round" stroke-linejoin="round"><use href="#clipboard"/></svg>Meetings</a>
          <a href="#" class="flex h-[90px] shrink-0 items-center gap-[45px] px-[27px]"><svg class="size-9" fill="none" stroke="currentColor" stroke-width="2" stroke-linecap="round" stroke-linejoin="round"><use href="#chart"/></svg>Analytics</a>
          <a href="#" class="flex h-[90px] shrink-0 items-center gap-[45px] px-[27px]"><svg class="size-9" fill="none" stroke="currentColor" stroke-width="2" stroke-linecap="round" stroke-linejoin="round"><use href="#file"/></svg>Reports</a>
          <a href="#" class="flex h-[90px] shrink-0 items-center gap-[45px] px-[27px]"><svg class="size-9" fill="none" stroke="currentColor" stroke-width="2" stroke-linecap="round" stroke-linejoin="round"><use href="#clipboard"/></svg>Projects</a>
          <div class="mt-[27px] flex h-[54px] shrink-0 items-center gap-[27px] mb-[9px]"><span class="h-0.5 flex-1 bg-[#e2e8f0]"></span><h2 class="text-[27px] tracking-wider text-[#64748b]">COMMUNICATION</h2></div>
          <a href="#" class="flex h-[90px] shrink-0 items-center gap-[45px] px-[27px]"><svg class="size-9" fill="none" stroke="currentColor" stroke-width="2" stroke-linecap="round" stroke-linejoin="round"><use href="#bubble"/></svg>Committee</a>
          <a href="#" class="flex h-[90px] shrink-0 items-center gap-[45px] px-[27px]"><svg class="size-9" fill="none" stroke="currentColor" stroke-width="2" stroke-linecap="round" stroke-linejoin="round"><use href="#bubble"/></svg>Messages</a>
          <a href="#" class="flex h-[90px] shrink-0 items-center gap-[45px] px-[27px]"><svg class="size-9" fill="none" stroke="currentColor" stroke-width="2" stroke-linecap="round" stroke-linejoin="round"><use href="#phone"/></svg>Directory</a>
          <div class="mt-[27px] flex h-[54px] shrink-0 items-center gap-[27px] mb-[9px]"><span class="h-0.5 flex-1 bg-[#e2e8f0]"></span><h2 class="text-[27px] tracking-wider text-[#64748b]">RESOURCES</h2></div>
          <a href="#" class="flex h-[90px] shrink-0 items-center gap-[45px] px-[27px]"><svg class="size-9" fill="none" stroke="currentColor" stroke-width="2" stroke-linecap="round" stroke-linejoin="round"><use href="#folderl"/></svg>Toolkit</a>
        </nav>

        <main class="flex min-w-0 flex-1 gap-9 px-[54px] pb-[178px] pt-[54px]">
          <!-- Channel list -->
          <section class="w-[720px] shrink-0 rounded-[18px] border-2 border-[#e5e5e5] bg-white shadow-sm">
            <div class="flex items-center justify-between px-[54px] pt-[61px]">
              <div>
                <h2 class="text-[40px] font-bold leading-[54px] tracking-tight">Channels</h2>
                <p class="text-[27px] leading-[45px]">Select a conversation</p>
              </div>
              <button aria-label="Collapse channels" class="mr-[18px] -mt-4"><svg class="size-9" fill="none" stroke="currentColor" stroke-width="2" stroke-linecap="round" stroke-linejoin="round"><use href="#left"/></svg></button>
            </div>
            <div class="flex flex-col gap-[18px] px-[18px] pt-[38px] font-medium">
              <button class="flex items-center gap-[27px] rounded-[14px] p-[27px] text-left"><span class="flex size-[72px] shrink-0 items-center justify-center rounded-[14px] bg-[#dde9fc] text-[#203ea8]"><svg class="size-9" fill="none" stroke="currentColor" stroke-width="2" stroke-linecap="round" stroke-linejoin="round"><use href="#square"/></svg></span><span class="min-w-0 flex-1 overflow-hidden whitespace-nowrap"><span class="block leading-[45px]">General Chat</span><span class="mt-[9px] block text-[27px] leading-[34px]">Open discussion for all team members</span></span></button>
              <button class="flex items-center gap-[27px] rounded-[14px] bg-[#3985b8] p-[27px] text-left"><span class="flex size-[72px] shrink-0 items-center justify-center rounded-[14px] bg-[#f1e7fd] text-[#6425ae]"><svg class="size-9" fill="none" stroke="currentColor" stroke-width="2" stroke-linecap="round" stroke-linejoin="round"><use href="#users"/></svg></span><span class="min-w-0 flex-1 overflow-hidden whitespace-nowrap"><span class="block leading-[45px] text-white">Committee Chat</span><span class="mt-[9px] block text-[27px] leading-[34px]">Specific committee discussions</span></span></button>
              <button class="flex items-center gap-[27px] rounded-[14px] p-[27px] text-left"><span class="flex size-[72px] shrink-0 items-center justify-center rounded-[14px] bg-[#e1fae8] text-[#2b6239]"><svg class="size-9" fill="none" stroke="currentColor" stroke-width="2" stroke-linecap="round" stroke-linejoin="round"><use href="#building"/></svg></span><span class="min-w-0 flex-1 overflow-hidden whitespace-nowrap"><span class="block leading-[45px]">Host Chat</span><span class="mt-[9px] block text-[27px] leading-[34px]">Coordination with sandwich collection hosts</span></span></button>
              <button class="flex items-center gap-[27px] rounded-[14px] p-[27px] text-left"><span class="flex size-[72px] shrink-0 items-center justify-center rounded-[14px] bg-[#fcedd8] text-[#913a18]"><svg class="size-9" fill="none" stroke="currentColor" stroke-width="2" stroke-linecap="round" stroke-linejoin="round"><use href="#truck"/></svg></span><span class="min-w-0 flex-1 overflow-hidden whitespace-nowrap"><span class="block leading-[45px]">Driver Chat</span><span class="mt-[9px] block text-[27px] leading-[34px]">Delivery and transportation coordination</span></span></button>
              <button class="flex items-center gap-[27px] rounded-[14px] p-[27px] text-left"><span class="flex size-[72px] shrink-0 items-center justify-center rounded-[14px] bg-[#f9e3e3] text-[#8b241d]"><svg class="size-9" fill="none" stroke="currentColor" stroke-width="2" stroke-linecap="round" stroke-linejoin="round"><use href="#heart"/></svg></span><span class="min-w-0 flex-1 overflow-hidden whitespace-nowrap"><span class="block leading-[45px]">Recipient Chat</span><span class="mt-[9px] block text-[27px] leading-[34px]">Communication with receiving organizations</span></span></button>
              <button class="flex items-center gap-[27px] rounded-[14px] p-[27px] text-left"><span class="flex size-[72px] shrink-0 items-center justify-center rounded-[14px] bg-[#e1e7fe] text-[#352f9e]"><svg class="size-9" fill="none" stroke="currentColor" stroke-width="2" stroke-linecap="round" stroke-linejoin="round"><use href="#shield"/></svg></span><span class="min-w-0 flex-1 overflow-hidden whitespace-nowrap"><span class="flex items-center gap-4 leading-[49px]">Core Team<span class="rounded-full bg-[#e89a54] px-[25px] text-[27px] font-bold leading-[49px]">Admin</span></span><span class="mt-[9px] block text-[27px] leading-[34px]">Private administrative discussions</span></span></button>
              <button class="flex items-center gap-[27px] rounded-[14px] p-[27px] text-left"><span class="flex size-[72px] shrink-0 items-center justify-center rounded-[14px] bg-[#d5f9f0] text-[#295e58]"><svg class="size-9" fill="none" stroke="currentColor" stroke-width="2" stroke-linecap="round" stroke-linejoin="round"><use href="#mail"/></svg></span><span class="min-w-0 flex-1 overflow-hidden whitespace-nowrap"><span class="block leading-[45px]">Direct Messages</span><span class="mt-[9px] block text-[27px] leading-[34px]">One-on-one conversations</span></span></button>
              <button class="flex items-center gap-[27px] rounded-[14px] p-[27px] text-left"><span class="flex size-[72px] shrink-0 items-center justify-center rounded-[14px] bg-[#f8e8f3] text-[#942250]"><svg class="size-9" fill="none" stroke="currentColor" stroke-width="2" stroke-linecap="round" stroke-linejoin="round"><use href="#round"/></svg></span><span class="min-w-0 flex-1 overflow-hidden whitespace-nowrap"><span class="block leading-[45px]">Group Messages</span><span class="mt-[9px] block text-[27px] leading-[34px]">Custom group conversations</span></span></button>
            </div>
          </section>

          <!-- Conversation panel -->
          <section class="min-w-0 flex-1 rounded-[18px] border-2 border-[#e5e5e5] bg-white shadow-sm">
            <div class="flex h-[192px] items-center gap-[27px] border-b-2 border-[#e5e5e5] px-[54px] pt-7">
              <span class="flex size-[72px] items-center justify-center rounded-[14px] bg-[#f1e7fd] text-[#6425ae]"><svg class="size-9" fill="none" stroke="currentColor" stroke-width="2" stroke-linecap="round" stroke-linejoin="round"><use href="#users"/></svg></span>
              <div>
                <h2 class="flex items-center gap-[18px] text-[40px] font-bold leading-[63px] tracking-tight"><svg class="size-9" fill="none" stroke="currentColor" stroke-width="2" stroke-linecap="round" stroke-linejoin="round"><use href="#hash"/></svg>Committee Chat</h2>
                <p class="leading-[45px]">Specific committee discussions</p>
              </div>
            </div>
            <div class="px-[54px] pt-[54px]">
              <h2 class="flex items-center gap-[18px] text-[54px] font-bold leading-[72px]"><svg class="size-[54px]" fill="none" stroke="currentColor" stroke-width="2" stroke-linecap="round" stroke-linejoin="round"><use href="#users"/></svg>Committee Chat</h2>
              <div class="mt-[54px] grid grid-cols-3 gap-9">
                <a href="#" class="rounded-[18px] border-2 border-[#e5e5e5] p-[54px]"><div class="mb-[27px] flex items-center gap-[27px]"><svg class="h-[72px] w-[49px] shrink-0 text-[#4b80ee]" viewBox="0 0 24 24" fill="none" stroke="currentColor" stroke-width="2" stroke-linecap="round" stroke-linejoin="round"><use href="#users"/></svg><div><h3 class="text-[63px] font-bold leading-[88px]">Marketing Committee</h3><p class="leading-[45px] text-[#4b5563]">Marketing campaigns and promotions</p></div></div></a>
                <a href="#" class="rounded-[18px] border-2 border-[#e5e5e5] p-[54px]"><div class="mb-[27px] flex items-center gap-[27px]"><svg class="h-[72px] w-[62px] shrink-0 text-[#4b80ee]" viewBox="0 0 24 24" fill="none" stroke="currentColor" stroke-width="2" stroke-linecap="round" stroke-linejoin="round"><use href="#users"/></svg><div><h3 class="text-[63px] font-bold leading-[88px]">Grant Committee</h3><p class="leading-[45px] text-[#4b5563]">Grant applications and funding</p></div></div></a>
                <a href="#" class="rounded-[18px] border-2 border-[#e5e5e5] p-[54px]"><div class="mb-[27px] flex items-center gap-[27px]"><svg class="h-[72px] w-[72px] shrink-0 text-[#4b80ee]" viewBox="0 0 24 24" fill="none" stroke="currentColor" stroke-width="2" stroke-linecap="round" stroke-linejoin="round"><use href="#users"/></svg><div><h3 class="whitespace-nowrap text-[63px] font-bold leading-[88px]">Group Events</h3><p class="leading-[45px] text-[#4b5563]">Team events and activities</p></div></div></a>
                <a href="#" class="rounded-[18px] border-2 border-[#e5e5e5] p-[54px]"><div class="mb-[27px] flex items-center gap-[27px]"><svg class="h-[72px] w-[54px] shrink-0 text-[#4b80ee]" viewBox="0 0 24 24" fill="none" stroke="currentColor" stroke-width="2" stroke-linecap="round" stroke-linejoin="round"><use href="#users"/></svg><div><h3 class="text-[63px] font-bold leading-[88px]">Finance Committee</h3><p class="whitespace-nowrap leading-[45px] text-[#4b5563]">Budget and financial planning</p></div></div></a>
                <a href="#" class="rounded-[18px] border-2 border-[#e5e5e5] p-[54px]"><div class="mb-[27px] flex items-center gap-[27px]"><svg class="h-[72px] w-[70px] shrink-0 text-[#4b80ee]" viewBox="0 0 24 24" fill="none" stroke="currentColor" stroke-width="2" stroke-linecap="round" stroke-linejoin="round"><use href="#users"/></svg><div><h3 class="text-[63px] font-bold leading-[88px]">Operations</h3><p class="leading-[45px] text-[#4b5563]">Daily operations and<br>logistics</p></div></div></a>
              </div>
            </div>
          </section>
        </main>
      </div>
    </div>
  </div>

  <!-- Desktop and dock -->
  <footer class="relative h-28 shrink-0 bg-linear-to-r from-[#0d1c12] via-[#20180f] to-[#23301c] px-16 pt-0.5">
    <div class="absolute inset-y-0 right-0 flex w-[276px] flex-col justify-between overflow-hidden whitespace-nowrap bg-linear-to-b from-[#15140c] via-[#d8d38c] to-[#efeaa3] font-[Inter,sans-serif] text-[25px] font-semibold leading-[34px] text-black">
      <span class="mt-3 pl-[210px]">m/nicu</span><span class="-mb-4 pl-6">git clone [https://github</span>
    </div>
    <ul class="relative flex h-[100px] rounded-[28px] border-2 border-[#484840] bg-linear-to-r from-[#17201b] via-[#1e221a] via-60% to-[#6f6c40] pl-1 pt-[13px] shadow-[0_0_80px_rgba(0,0,0,0.26)]">
      <li class="relative flex w-[81px] shrink-0 justify-center"><button class="size-16" aria-label="Finder"><svg viewBox="0 0 64 64"><rect width="64" height="64" rx="14" fill="#3f80ec"/><path d="M14 0h22c-6 12-8 22-9 37h9c0 10 1 20 3 27H14A14 14 0 0 1 0 50V14A14 14 0 0 1 14 0z" fill="#54b3f2"/><path d="M36 0h14a14 14 0 0 1 14 14v36a14 14 0 0 1-14 14H39c-2-7-3-17-3-27h-9c1-15 3-25 9-37z" fill="#e9ecf4"/><path d="M17 18v6M47 18v6M12 43c9 11 31 11 40 0" fill="none" stroke="#152b42" stroke-width="3" stroke-linecap="round"/></svg></button><i class="absolute top-[73px] size-2 rounded-full bg-[#a2a29c]"></i></li>
      <li class="flex w-[81px] shrink-0 justify-center"><button class="size-16" aria-label="Launchpad"><svg viewBox="0 0 64 64"><rect width="64" height="64" rx="14" fill="#adb0b4"/><g><rect x="10" y="11" width="12" height="12" rx="3" fill="#74da52"/><rect x="26" y="11" width="12" height="12" rx="3" fill="#f0b93c"/><rect x="42" y="11" width="12" height="12" rx="3" fill="#ea8b34"/><rect x="10" y="26" width="12" height="12" rx="3" fill="#d9382c"/><rect x="26" y="26" width="12" height="12" rx="3" fill="#8b959c"/><rect x="42" y="26" width="12" height="12" rx="3" fill="#e94457"/><rect x="10" y="41" width="12" height="12" rx="3" fill="#8a3ad0"/><rect x="26" y="41" width="12" height="12" rx="3" fill="#3a8bf0"/><rect x="42" y="41" width="12" height="12" rx="3" fill="#58cba2"/></g></svg></button></li>
      <li class="flex w-[81px] shrink-0 justify-center"><button class="size-16" aria-label="Safari"><svg viewBox="0 0 64 64"><rect width="64" height="64" rx="14" fill="#f1f1f1"/><circle cx="32" cy="32" r="27" fill="#3f93e4"/><circle cx="32" cy="32" r="24" fill="none" stroke="#b9dcf6" stroke-width="3" stroke-dasharray="1 2.140"/><path d="M51 14 36 35l-8-7z" fill="#e1473b"/><path d="M13 50l15-22 8 7z" fill="#f2f2f2"/></svg></button></li>
      <li class="relative flex w-[81px] shrink-0 justify-center"><button class="size-16" aria-label="Messages"><svg viewBox="0 0 64 64"><rect width="64" height="64" rx="14" fill="#65d757"/><path d="M32 14c14 0 24 8 24 18s-10 18-24 18l-5-1c-2 2-5 4-9 4 2-2 3-4 3-6C13 44 8 38 8 32c0-10 10-18 24-18z" fill="#e4f6e1"/></svg></button><span class="absolute -top-[7px] left-[31px] rounded-full bg-[#df4a3c] px-[6px] font-[Inter,sans-serif] text-[14px] leading-[30px] text-white">1,348</span><i class="absolute top-[73px] size-2 rounded-full bg-[#a2a29c]"></i></li>
      <li class="flex w-[81px] shrink-0 justify-center"><button class="size-16" aria-label="Mail"><svg viewBox="0 0 64 64"><defs><linearGradient id="gm" x2="0" y2="1"><stop stop-color="#3370ea"/><stop offset="1" stop-color="#5cc0f8"/></linearGradient></defs><rect width="64" height="64" rx="14" fill="url(#gm)"/><rect x="9" y="18" width="46" height="29" rx="4" fill="#f3f3f3"/><path d="m10 20 22 18 22-18M10 46l16-14M54 46 38 32" fill="none" stroke="#a8aeb6" stroke-width="2"/></svg></button></li>
      <li class="flex w-[81px] shrink-0 justify-center"><button class="size-16" aria-label="Maps"><svg viewBox="0 0 64 64"><defs><clipPath id="cr"><rect width="64" height="64" rx="14"/></clipPath></defs><g clip-path="url(#cr)"><path d="M0 0h64v64H0z" fill="#77cf68"/><path d="M0 22 42 64H0z" fill="#dd80bd"/><path d="m0 14 50 50h14L10 10z" fill="#ededed"/><path d="m28 28 36 34v2H38z" fill="#f2c64a"/><path d="M17 0h14v50H17z" fill="#3577ea"/><path d="M12 0h5v30h-5zM31 0h5v40h-5z" fill="#f4f4f4"/><path d="M44 0c0 12 10 20 20 20" fill="none" stroke="#e6e6ea" stroke-width="7"/></g><circle cx="24" cy="40" r="15" fill="#3a7cf0" stroke="#f4f4f4" stroke-width="3"/><path d="m24 29 8 20-8-4-8 4z" fill="#fff"/></svg></button></li>
      <li class="relative flex w-[81px] shrink-0 justify-center"><button class="size-16" aria-label="Photos"><svg viewBox="0 0 64 64"><rect width="64" height="64" rx="14" fill="#fcfcfc"/><g fill-opacity=".88"><rect x="24" y="5" width="16" height="26" rx="8" fill="#f29a38"/><rect x="24" y="5" width="16" height="26" rx="8" fill="#f0d43c" transform="rotate(45 32 32)"/><rect x="24" y="5" width="16" height="26" rx="8" fill="#a6cc48" transform="rotate(90 32 32)"/><rect x="24" y="5" width="16" height="26" rx="8" fill="#5bb98a" transform="rotate(135 32 32)"/><rect x="24" y="5" width="16" height="26" rx="8" fill="#5d9be6" transform="rotate(180 32 32)"/><rect x="24" y="5" width="16" height="26" rx="8" fill="#8076cf" transform="rotate(225 32 32)"/><rect x="24" y="5" width="16" height="26" rx="8" fill="#c570b4" transform="rotate(270 32 32)"/><rect x="24" y="5" width="16" height="26" rx="8" fill="#ea6450" transform="rotate(315 32 32)"/></g></svg></button><i class="absolute top-[73px] size-2 rounded-full bg-[#a2a29c]"></i></li>
      <li class="flex w-[81px] shrink-0 justify-center"><button class="size-16" aria-label="FaceTime"><svg viewBox="0 0 64 64"><rect width="64" height="64" rx="14" fill="#66d85a"/><rect x="9" y="18" width="32" height="28" rx="7" fill="#eefaed"/><path d="m44 28 10-8v24l-10-8z" fill="#d3f2cf"/></svg></button></li>
      <li class="flex w-[81px] shrink-0 justify-center"><button class="flex size-16 flex-col overflow-hidden rounded-[14px] bg-[#f7f7f7] font-[Inter,sans-serif]" aria-label="Calendar"><span class="w-full bg-[#e05a50] text-[14px] leading-5 text-white">JUL</span><span class="w-full text-[34px] leading-10 text-[#222]">3</span></button></li>
      <li class="flex w-[81px] shrink-0 justify-center"><button class="size-16" aria-label="Contacts"><svg viewBox="0 0 64 64"><path d="M58 10h6v14h-6z" fill="#9aa"/><path d="M58 24h6v10h-6z" fill="#4aa3dc"/><path d="M58 34h6v10h-6z" fill="#e8903a"/><path d="M58 44h6v10h-6z" fill="#58b25a"/><rect width="62" height="64" rx="12" fill="#a8834f"/><circle cx="32" cy="32" r="20" fill="none" stroke="#80613a" stroke-width="2"/><circle cx="32" cy="27" r="7" fill="#80613a"/><path d="M18 45c4-12 24-12 28 0-8 8-20 8-28 0z" fill="#80613a"/></svg></button></li>
      <li class="relative flex w-[81px] shrink-0 justify-center"><button class="size-16" aria-label="Reminders"><svg viewBox="0 0 64 64"><rect width="64" height="64" rx="14" fill="#fafafa"/><path d="M24 16h32M24 32h32M24 48h32" stroke="#b5b5b8" stroke-width="1.500"/><circle cx="13" cy="16" r="4.500" fill="#2f70ea"/><circle cx="13" cy="32" r="4.500" fill="#e2463a"/><circle cx="13" cy="48" r="4.500" fill="#ec9a34"/></svg></button><span class="absolute -top-[7px] left-[50px] size-[30px] rounded-full bg-[#df4a3c] text-center font-[Inter,sans-serif] text-[14px] leading-[30px] text-white">6</span></li>
      <li class="flex w-[81px] shrink-0 justify-center"><button class="size-16" aria-label="Notes"><svg viewBox="0 0 64 64"><rect width="64" height="64" rx="14" fill="#f1f0ed"/><path d="M14 0h36a14 14 0 0 1 14 14v2H0v-2A14 14 0 0 1 14 0z" fill="#f7ce46"/><path d="M2 19h60" stroke="#a8a59b" stroke-width="2" stroke-dasharray="1 2"/><path d="M0 32h64M0 47h64" stroke="#cfcecb" stroke-width="1.500"/></svg></button></li>
      <li class="flex w-[81px] shrink-0 justify-center"><button class="size-16" aria-label="Freeform"><svg viewBox="0 0 64 64"><rect width="64" height="64" rx="14" fill="#fff"/><circle cx="25" cy="38" r="18" fill="#ec7050"/><rect x="22" y="8" width="34" height="34" rx="4" fill="#56c3f0" fill-opacity=".9"/><path d="M13 41c3-12 6-22 9-20s-3 18 1 18 5-16 9-15-2 15 3 14 4-10 8-10-1 8 4 8 6-4 9-8" fill="none" stroke="#143a64" stroke-width="4" stroke-linecap="round"/></svg></button></li>
      <li class="flex w-[81px] shrink-0 justify-center"><button class="size-16" aria-label="Music"><svg viewBox="0 0 64 64"><rect width="64" height="64" rx="14" fill="#e94857"/><path d="M24 45V18l23-5v26" fill="none" stroke="#fff" stroke-width="4"/><path d="M24 17l23-5v8l-23 5z" fill="#fff"/><ellipse cx="19" cy="46" rx="7" ry="6" fill="#fff"/><ellipse cx="42" cy="41" rx="7" ry="6" fill="#fff"/></svg></button></li>
      <li class="relative flex w-[81px] shrink-0 justify-center"><button class="flex size-16 items-center justify-center rounded-[14px] bg-[#1b2426] font-[Inter,sans-serif] text-[26px] leading-none text-white" aria-label="TV"><svg class="h-6 w-5" viewBox="0 0 24 28"><use href="#apple"/></svg>tv</button><i class="absolute top-[73px] size-2 rounded-full bg-[#a2a29c]"></i></li>
      <li class="flex w-[81px] shrink-0 justify-center"><button class="size-16" aria-label="News"><svg viewBox="0 0 64 64"><rect width="64" height="64" rx="14" fill="#fff"/><path d="M13 13h13l25 25v13H38L13 26z" fill="#e8475c"/><path d="M34 13h17v17zM13 34l17 17H13z" fill="#e8475c"/></svg></button></li>
      <li class="flex w-[81px] shrink-0 justify-center"><button class="size-16" aria-label="Keynote"><svg viewBox="0 0 64 64"><rect width="64" height="64" rx="14" fill="#3c8cf2"/><path d="M16 10h32l3 18H13z" fill="#f2f4f8"/><circle cx="32" cy="17" r="6" fill="#56b85c"/><path d="M32 17V11a6 6 0 0 1 6 6z" fill="#f0a13c"/><path d="M32 28v25M22 54h20" stroke="#e2e8f2" stroke-width="4"/></svg></button></li>
      <li class="relative flex w-[81px] shrink-0 justify-center"><button class="size-16" aria-label="Numbers"><svg viewBox="0 0 64 64"><rect width="64" height="64" rx="14" fill="#6ddc52"/><path d="M16 54V41M27 54V30M38 54V10M49 54V22" stroke="#fbfffa" stroke-width="8"/></svg></button><i class="absolute top-[73px] size-2 rounded-full bg-[#a2a29c]"></i></li>
      <li class="flex w-[81px] shrink-0 justify-center"><button class="size-16" aria-label="Pages"><svg viewBox="0 0 64 64"><rect width="64" height="64" rx="14" fill="#f09c3c"/><path d="M49 12c4 0 4 4 2 7L20 48l-8 5 4-9 29-30z" fill="#fafafa"/><path d="M16 54h38" stroke="#f9d5a7" stroke-width="2"/></svg></button></li>
      <li class="flex w-[81px] shrink-0 justify-center"><button class="size-16" aria-label="App Store"><svg viewBox="0 0 64 64"><rect width="64" height="64" rx="14" fill="#368bee"/><path d="M35 14 20 39M29 14l19 35M16 49l2-4M11 40h27M46 40h7" stroke="#fff" stroke-width="5.500" stroke-linecap="round"/></svg></button></li>
      <li class="flex w-[81px] shrink-0 justify-center"><button class="size-16" aria-label="System Settings"><svg viewBox="0 0 64 64"><rect width="64" height="64" rx="14" fill="#b8bbbf"/><circle cx="32" cy="32" r="26" fill="#35383b"/><circle cx="32" cy="32" r="25" fill="none" stroke="#8c8f93" stroke-width="4" stroke-dasharray="2 2"/><circle cx="32" cy="32" r="18" fill="none" stroke="#a3a6a9" stroke-width="4"/><path d="M32 32h17M32 32l-9-15M32 32l-9 15" stroke="#a3a6a9" stroke-width="4"/><circle cx="32" cy="32" r="6" fill="#55585b"/></svg></button></li>
      <li class="flex w-[81px] shrink-0 justify-center"><button class="size-16" aria-label="iPhone Mirroring"><svg viewBox="0 0 64 64"><rect width="64" height="64" rx="14" fill="#b3b6b9"/><rect x="19" y="5" width="27" height="54" rx="5" fill="#1e4560"/><path d="M22 7h20l2 3C40 20 26 28 21 50V9z" fill="#f3a696"/><path d="M44 10c0 20-16 24-21 46l-2-3V38C26 26 38 20 41 8z" fill="#3b9db4" fill-opacity=".8"/><rect x="19" y="5" width="27" height="54" rx="5" fill="none" stroke="#222" stroke-width="2"/><path d="M29 8h7" stroke="#111" stroke-width="3"/></svg></button></li>
      <li class="flex w-[81px] shrink-0 justify-center"><button class="size-16" aria-label="Feedback Assistant"><svg viewBox="0 0 64 64"><rect width="64" height="64" rx="14" fill="#a557d6"/><path d="M21 15h22a7 7 0 0 1 7 7v16a7 7 0 0 1-7 7H32l-8 7v-7h-3a7 7 0 0 1-7-7V22a7 7 0 0 1 7-7z" fill="#fff"/><path d="M32 21v12M32 37v4" stroke="#9b4bcd" stroke-width="4"/></svg></button></li>
      <li class="flex w-[39px] shrink-0 justify-center" role="separator"><span class="h-[72px] w-0.5 bg-[#565851]"></span></li>
      <li class="relative flex w-[81px] shrink-0 justify-center"><button class="size-16" aria-label="Chrome Beta"><svg viewBox="0 0 64 64"><rect width="64" height="64" rx="14" fill="#f3f3f3"/><use href="#chrome" x="4" y="6" width="56" height="56"/><path d="M14 0h21L0 35V14A14 14 0 0 1 14 0z" fill="#2b58b5"/><text x="0" y="0" transform="translate(6 25) rotate(-45)" font-family="Inter" font-size="10" font-weight="600" fill="#fff">BETA</text></svg></button><i class="absolute top-[73px] size-2 rounded-full bg-[#a2a29c]"></i></li>
      <li class="relative flex w-[81px] shrink-0 justify-center"><button class="size-16" aria-label="Stickies"><svg viewBox="0 0 64 64"><rect width="64" height="64" rx="14" fill="#d8c56a"/><path d="M14 0h36a14 14 0 0 1 14 14v28L46 57H14A14 14 0 0 1 0 43V14A14 14 0 0 1 14 0z" fill="#f7ee9d"/><path d="M11 22c4-10 6-14 7-6s2 6 5 1 4 4 8 1h22M11 31h42M11 42h22" fill="none" stroke="#d6c568" stroke-width="4"/></svg></button><i class="absolute top-[73px] size-2 rounded-full bg-[#a2a29c]"></i></li>
      <li class="relative flex w-[81px] shrink-0 justify-center"><button class="size-16" aria-label="Clock"><svg viewBox="0 0 64 64" fill="none" stroke-width="3"><rect width="64" height="64" rx="12" fill="#20223a"/><path d="M17 5h30" stroke="#f0cf48" stroke-width="4"/><path d="M5 46V14q0-8 6-8" stroke="#dc4a44"/><path d="M59 46V14q0-8-6-8" stroke="#63d16a"/><path d="M5 50q0 9 8 9h38q8 0 8-9" stroke="#4d94f0"/><circle cx="32" cy="32" r="21" stroke="#383c58" stroke-dasharray="2 9"/><path d="m31 32-6-15M32 32l20-9" stroke="#e8e8ee" stroke-width="4"/><circle cx="32" cy="32" r="4" fill="#e8e8ee"/></svg></button><i class="absolute top-[73px] size-2 rounded-full bg-[#a2a29c]"></i></li>
      <li class="relative flex w-[81px] shrink-0 justify-center"><button class="size-16" aria-label="Firefox Developer Edition"><svg viewBox="0 0 64 64"><rect width="64" height="64" rx="14" fill="#1e1338"/><path d="M6 28c0-5 4-9 6-12 1 3 3 4 6 5 5-4 11-2 13-2 1-8 4-13 9-17-1 6 2 10 5 13 3-1 5 0 6 3 12 14 8 42-19 43C14 61 4 46 6 28z" fill="#3aa8f4"/><path d="M31 18c1-8 4-12 9-16 0 8 18 18 18 34-3-10-8-12-14-14" fill="#71d5fb"/><circle cx="33" cy="34" r="12" fill="#292a9e"/><path d="M8 40c6 14 22 16 34 10" fill="none" stroke="#2874dc" stroke-width="7"/></svg></button><i class="absolute top-[73px] size-2 rounded-full bg-[#a2a29c]"></i></li>
      <li class="relative flex w-[81px] shrink-0 justify-center"><button class="size-16" aria-label="ChatGPT"><svg viewBox="0 0 64 64" fill="none" stroke="#20242c" stroke-width="3"><rect width="64" height="64" rx="14" fill="#f3f5fa" stroke="none"/><g><path id="kn" d="M22 38V19a10 10 0 0 1 18-6L27 21v15"/><use href="#kn" transform="rotate(60 32 32)"/><use href="#kn" transform="rotate(120 32 32)"/><use href="#kn" transform="rotate(180 32 32)"/><use href="#kn" transform="rotate(240 32 32)"/><use href="#kn" transform="rotate(300 32 32)"/></g></svg></button><i class="absolute top-[73px] size-2 rounded-full bg-[#a2a29c]"></i></li>
      <li class="relative flex w-[81px] shrink-0 justify-center"><button class="size-16" aria-label="Chrome"><svg viewBox="0 0 64 64"><rect width="64" height="64" rx="14" fill="#f3f3f3"/><use href="#chrome" x="4" y="4" width="56" height="56"/></svg></button><i class="absolute top-[73px] size-2 rounded-full bg-[#a2a29c]"></i></li>
      <li class="relative flex w-[81px] shrink-0 justify-center"><button class="size-16" aria-label="Terminal"><svg viewBox="0 0 64 64"><rect width="64" height="64" rx="14" fill="#b4bcc2"/><rect x="2" y="2" width="60" height="60" rx="12" fill="#000"/><rect x="7" y="7" width="50" height="50" rx="8" fill="#232426"/><path d="m11 12 6 4-6 5M22 24h8" fill="none" stroke="#fff" stroke-width="2.500"/></svg></button><i class="absolute top-[73px] size-2 rounded-full bg-[#a2a29c]"></i></li>
      <li class="relative flex w-[81px] shrink-0 justify-center"><button class="size-16" aria-label="Visual Studio Code"><svg viewBox="0 0 64 64"><rect width="64" height="64" rx="14" fill="#fff"/><path d="m10 24 4-4 30 23v11zM10 40l4 4 30-23V10z" fill="#2877c4"/><path d="m43 9 11 5v36l-11 5z" fill="#46a1ec"/></svg></button><i class="absolute top-[73px] size-2 rounded-full bg-[#a2a29c]"></i></li>
      <li class="relative flex w-[81px] shrink-0 justify-center"><button class="size-16" aria-label="Claude"><svg viewBox="0 0 64 64"><rect width="64" height="64" rx="14" fill="#cf7254"/><path d="M32 9v46M9 32h46M18 13l28 38M50 18 14 46M24 11l14 43M42 11 24 53M10 24l44 15" stroke="#fbefe9" stroke-width="4" stroke-linecap="round"/></svg></button><i class="absolute top-[73px] size-2 rounded-full bg-[#a2a29c]"></i></li>
      <li class="relative flex w-[81px] shrink-0 justify-center"><button class="size-16" aria-label="Preview"><svg class="overflow-visible" viewBox="0 0 64 64"><rect width="64" height="64" rx="12" fill="#eceef0"/><path d="M5 12a7 7 0 0 1 7-7h40a7 7 0 0 1 7 7v24H5z" fill="#9dbcf0"/><path d="M5 34h54v10H5z" fill="#28427e"/><path d="M5 40c14-4 24 4 34 2v17H12a7 7 0 0 1-7-7z" fill="#8b7a6c"/><path d="M33 34h26v10l6 20c-2 4-34 4-36 0l5-20z" fill="#c3cbd3"/><rect x="33" y="31" width="26" height="13" rx="3" fill="#1b1c1f"/><circle cx="46" cy="55" r="7" fill="#e6ecf2"/></svg></button><i class="absolute top-[73px] size-2 rounded-full bg-[#a2a29c]"></i></li>
      <li class="relative flex w-[81px] shrink-0 justify-center"><button class="size-16" aria-label="TextEdit"><svg class="overflow-visible" viewBox="0 0 64 64"><rect width="64" height="64" rx="12" fill="#fbfbfb"/><path d="M0 16h64M0 24h64M0 32h64M0 40h64M0 48h64" stroke="#b9bbc0" stroke-width="1.500"/><path d="M11 0v64" stroke="#f0b5b0"/><path d="m60-6-6 2-26 61-1 8 5-7L62-3z" fill="#9aa7b4" stroke="#5d6873"/></svg></button><i class="absolute top-[73px] size-2 rounded-full bg-[#a2a29c]"></i></li>
      <li class="relative flex w-[81px] shrink-0 justify-center"><button class="size-16" aria-label="Excel"><svg viewBox="0 0 64 64"><rect width="64" height="64" rx="14" fill="#fff"/><rect x="17" y="11" width="36" height="42" rx="3" fill="#2f7a4d"/><path d="M35 11h15a3 3 0 0 1 3 3v8H35z" fill="#58b985"/><path d="M17 22h18v10H17zM35 32h18v10H35z" fill="#3c9363"/><rect x="6" y="19" width="24" height="25" rx="3" fill="#206640"/><text x="11" y="38" font-family="Inter" font-size="19" font-weight="700" fill="#fff">X</text></svg></button><i class="absolute top-[73px] size-2 rounded-full bg-[#a2a29c]"></i></li>
      <li class="relative flex w-[81px] shrink-0 justify-center"><button class="size-16" aria-label="Writer"><svg viewBox="0 0 64 64"><rect width="64" height="64" rx="14" fill="#f8f3ea"/><path d="M8 20h5c3 0 4 1 5 5l4 18c1 4 4 3 5 0l6-19c1-4 4-4 5 0l5 19c1 3 4 3 5 0l5-18c1-3 2-4 6-4" fill="none" stroke="#0d0d0d" stroke-width="5"/></svg></button><i class="absolute top-[73px] size-2 rounded-full bg-[#a2a29c]"></i></li>
      <li class="flex w-9 shrink-0 justify-center" role="separator"><span class="h-[72px] w-0.5 bg-[#75705c]"></span></li>
      <li class="flex w-[81px] shrink-0 justify-center"><button class="-mt-1.5 h-[74px] w-[50px]" aria-label="Document"><svg viewBox="0 0 50 74"><path d="M4 0h28l18 26v48H0V9z" fill="#ececec"/><path d="M32 0l18 26H32z" fill="#fff" stroke="#c4c4c4"/><path d="M4 6h26M2 10h28M2 14h28M2 18h26M2 22h28M2 28h18" stroke="#a0a0a0"/></svg></button></li>
      <li class="flex w-[81px] shrink-0 justify-center"><button class="-mt-1.5 h-[74px] w-16" aria-label="Minimized window"><svg class="overflow-visible" viewBox="0 0 64 74"><path d="M0 1h63v73H0z" fill="#fafafc"/><path d="M0 1h63v8H0z" fill="#f3b6c4"/><path d="M0 10h63v4H0z" fill="#2f66d4"/><path d="M7 22h24M7 30h18M7 37h50M7 40h50M7 43h46M7 46h50M7 49h30M9 56h30M9 62h34" stroke="#a6a9b0"/><use href="#chrome" x="43" y="50" width="22" height="22"/></svg></button></li>
      <li class="flex w-[81px] shrink-0 justify-center"><button class="-mt-1.5 h-[74px] w-16" aria-label="Minimized window"><svg class="overflow-visible" viewBox="0 0 64 74"><path d="M0 1h63v73H0z" fill="#fafafc"/><path d="M0 1h63v8H0z" fill="#f3b6c4"/><path d="M0 10h63v4H0z" fill="#14161c"/><path d="M4 22h20M4 28h16M4 34h22M34 20h22M34 24h24M34 30h18M34 36h24M34 42h20M34 52h10" stroke="#a6a9b0"/><use href="#chrome" x="43" y="50" width="22" height="22"/></svg></button></li>
      <li class="flex w-[81px] shrink-0 justify-center"><button class="-mt-1.5 h-[74px] w-[58px]" aria-label="Trash"><svg viewBox="0 0 58 74"><defs><linearGradient id="tr"><stop stop-color="#55585c"/><stop offset=".5" stop-color="#8b8f94"/><stop offset="1" stop-color="#4d5054"/></linearGradient></defs><path d="M2 12h54l-6 56c-1 6-41 6-42 0z" fill="url(#tr)"/><ellipse cx="29" cy="12" rx="27" ry="6" fill="#3d4043"/><path d="m6 12 6-9 8 4 6-6 9 5 7-5 4 7 6 4-5 4H11z" fill="#e8eaec"/><path d="m20 8 5 5 4-6zM36 6l2 8 6-3z" fill="#4c8290"/><path d="m30 4 3 8 5-6z" fill="#b98a5a"/></svg></button></li>
    </ul>
  </footer>
</div>
</body>
</html>
